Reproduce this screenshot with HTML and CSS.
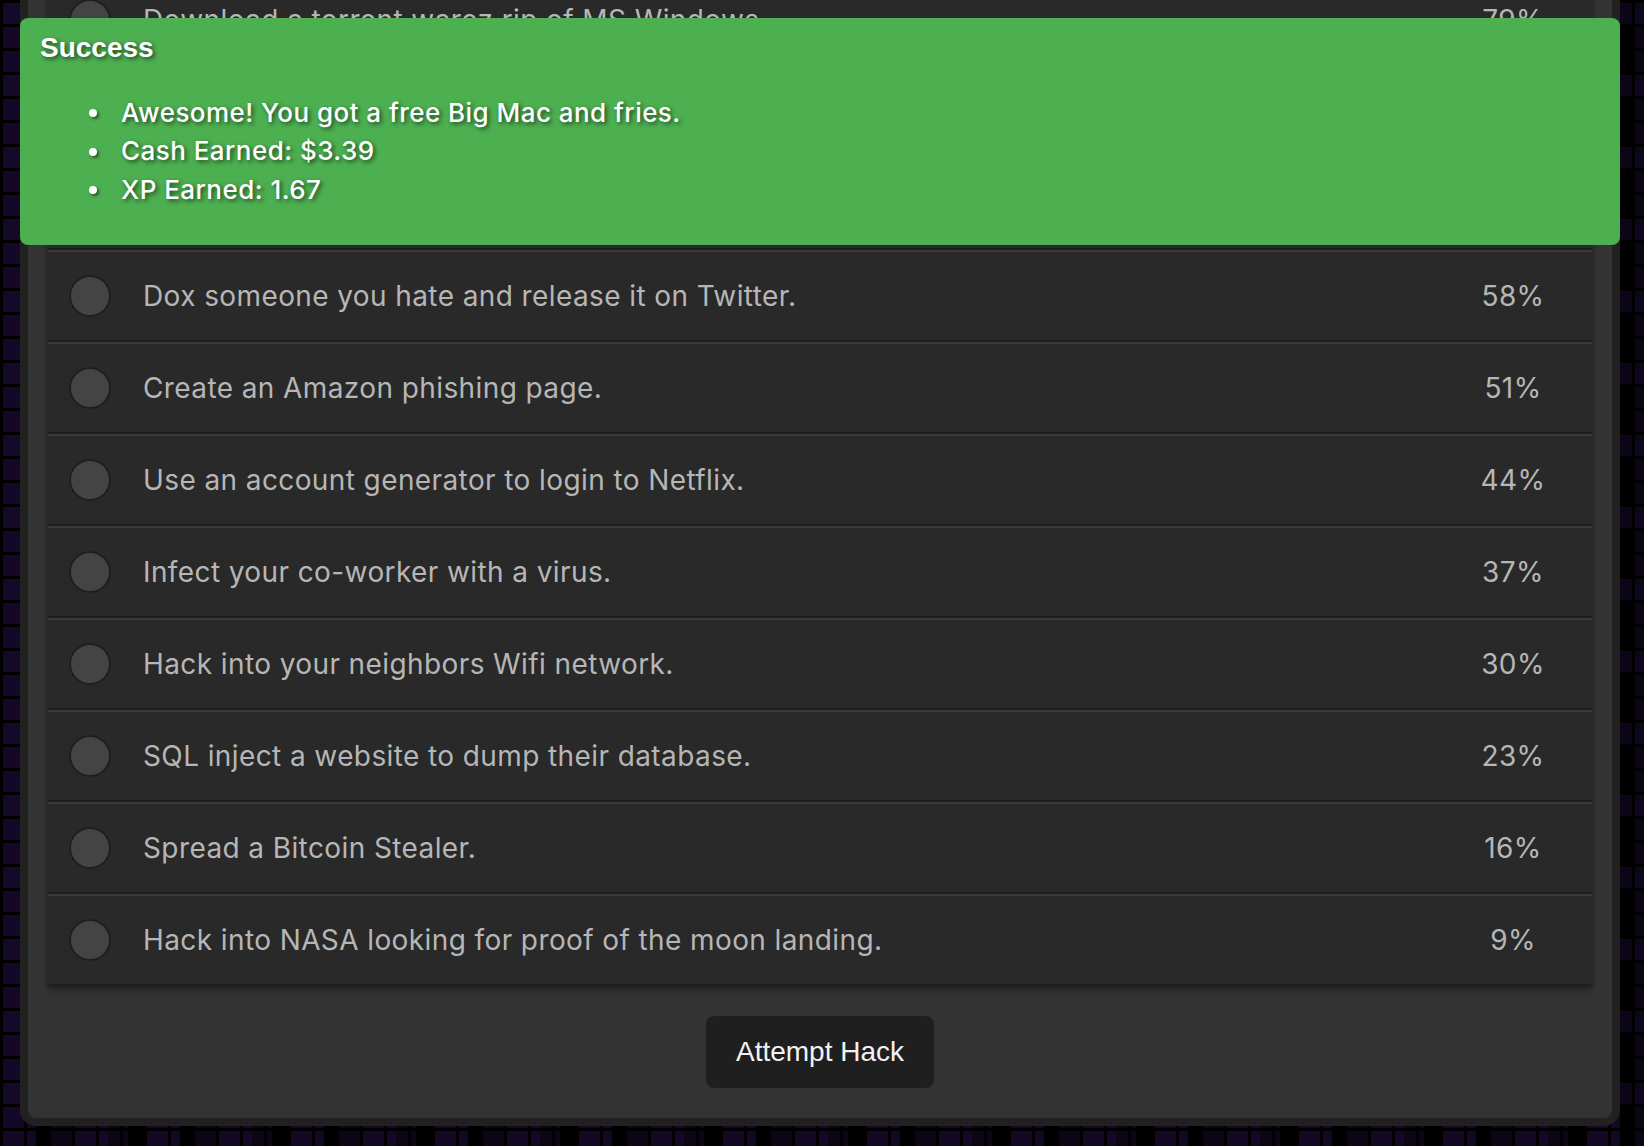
FILE: index.html
```html
<!DOCTYPE html>
<html lang="en">
<head>
<meta charset="utf-8">
<title>Hack</title>
<link rel="stylesheet" href="styles.css">
</head>
<body>
<div class="page">
  <div class="card">
    <ul class="hacks">
      <li class="hack"><span class="radio"></span><span class="label">Download a torrent warez rip of MS Windows.</span><span class="pct">79%</span></li>
      <li class="hack"><span class="radio"></span><span class="label">Steal your roommate's Netflix password.</span><span class="pct">72%</span></li>
      <li class="hack"><span class="radio"></span><span class="label">Hack into your school's grading system.</span><span class="pct">65%</span></li>
      <li class="hack"><span class="radio"></span><span class="label">Dox someone you hate and release it on Twitter.</span><span class="pct">58%</span></li>
      <li class="hack"><span class="radio"></span><span class="label">Create an Amazon phishing page.</span><span class="pct">51%</span></li>
      <li class="hack"><span class="radio"></span><span class="label">Use an account generator to login to Netflix.</span><span class="pct">44%</span></li>
      <li class="hack"><span class="radio"></span><span class="label">Infect your co-worker with a virus.</span><span class="pct">37%</span></li>
      <li class="hack"><span class="radio"></span><span class="label">Hack into your neighbors Wifi network.</span><span class="pct">30%</span></li>
      <li class="hack"><span class="radio"></span><span class="label">SQL inject a website to dump their database.</span><span class="pct">23%</span></li>
      <li class="hack"><span class="radio"></span><span class="label">Spread a Bitcoin Stealer.</span><span class="pct">16%</span></li>
      <li class="hack"><span class="radio"></span><span class="label">Hack into NASA looking for proof of the moon landing.</span><span class="pct">9%</span></li>
    </ul>
    <div class="actions"><button class="btn" type="button">Attempt Hack</button></div>
  </div>
  <div class="alert">
    <h4 class="alert-title">Success</h4>
    <ul class="alert-list">
      <li>Awesome! You got a free Big Mac and fries.</li>
      <li>Cash Earned: $3.39</li>
      <li>XP Earned: 1.67</li>
    </ul>
  </div>
</div>
</body>
</html>
```
FILE: styles.css
```css
html, body {
  margin: 0;
  padding: 0;
  height: 100%;
  overflow: hidden;
}
body {
  background-color: #000;
  background-image:
    linear-gradient(90deg, #000 3px, transparent 3px),
    linear-gradient(#000 3px, transparent 3px),
    linear-gradient(90deg, rgba(22, 9, 40, 0.9) 50%, transparent 50%),
    linear-gradient(rgba(16, 7, 30, 0.8) 34%, transparent 34%),
    linear-gradient(90deg, rgba(12, 5, 20, 1) 67%, transparent 67%);
  background-size: 24px 24px, 24px 24px, 72px 48px, 120px 72px, 48px 96px;
  background-position: 0 0, 0 0, 0 0, 24px 0, 0 24px;
  font-family: "Inter", "Liberation Sans", sans-serif;
}
.page {
  position: relative;
  display: flow-root;
  padding: 0 24px 0 20px;
}
.card {
  margin-top: -48px;
  background: #333;
  border: 8px solid #212121;
  border-radius: 16px;
  padding: 14px 20px 30px;
}
.hacks {
  list-style: none;
  margin: 0;
  padding: 0;
  box-shadow: 0 3px 6px rgba(0, 0, 0, 0.45);
}
.hack {
  display: flex;
  align-items: center;
  height: 88px;
  background: #292929;
  border-top: 2px solid #3a3a3a;
  border-bottom: 2px solid #1e1e1e;
  padding-left: 21px;
  color: #b6b6b6;
  font-size: 28px;
  letter-spacing: 0.4px;
}
.radio {
  flex: none;
  width: 38px;
  height: 38px;
  border-radius: 50%;
  background: #444;
  border: 2px solid #1f1f1f;
}
.label {
  flex: 1;
  margin-left: 32px;
}
.pct {
  flex: none;
  width: 80px;
  margin-right: 39px;
  text-align: center;
}
.actions {
  display: flex;
  justify-content: center;
  margin-top: 30px;
}
.btn {
  width: 228px;
  height: 72px;
  background: #1f1f1f;
  color: #f2f2f2;
  border: none;
  border-radius: 8px;
  font-family: "Liberation Sans", Arial, sans-serif;
  font-size: 28px;
  padding: 0;
}
.alert {
  position: absolute;
  top: 18px;
  left: 20px;
  width: 1600px;
  box-sizing: border-box;
  background: #4caf50;
  border-radius: 8px;
  padding: 14px 20px 14px 20px;
  color: #fff;
  text-shadow: 2px 2px 4px rgba(0, 0, 0, 0.6);
}
.alert-title {
  margin: 0;
  font-family: "Liberation Sans", Arial, sans-serif;
  font-weight: bold;
  font-size: 28px;
  line-height: 32px;
}
.alert-list {
  list-style: none;
  margin: 30px 0 22px;
  padding: 0 0 0 49px;
  font-size: 26px;
  letter-spacing: 0.45px;
  line-height: 38.4px;
  font-weight: 500;
}
.alert-list li {
  display: flex;
  align-items: center;
}
.alert-list li::before {
  content: "";
  flex: none;
  width: 8px;
  height: 8px;
  border-radius: 50%;
  background: #fff;
  margin-right: 24px;
  box-shadow: 2px 2px 3px rgba(0, 0, 0, 0.5);
}
```
